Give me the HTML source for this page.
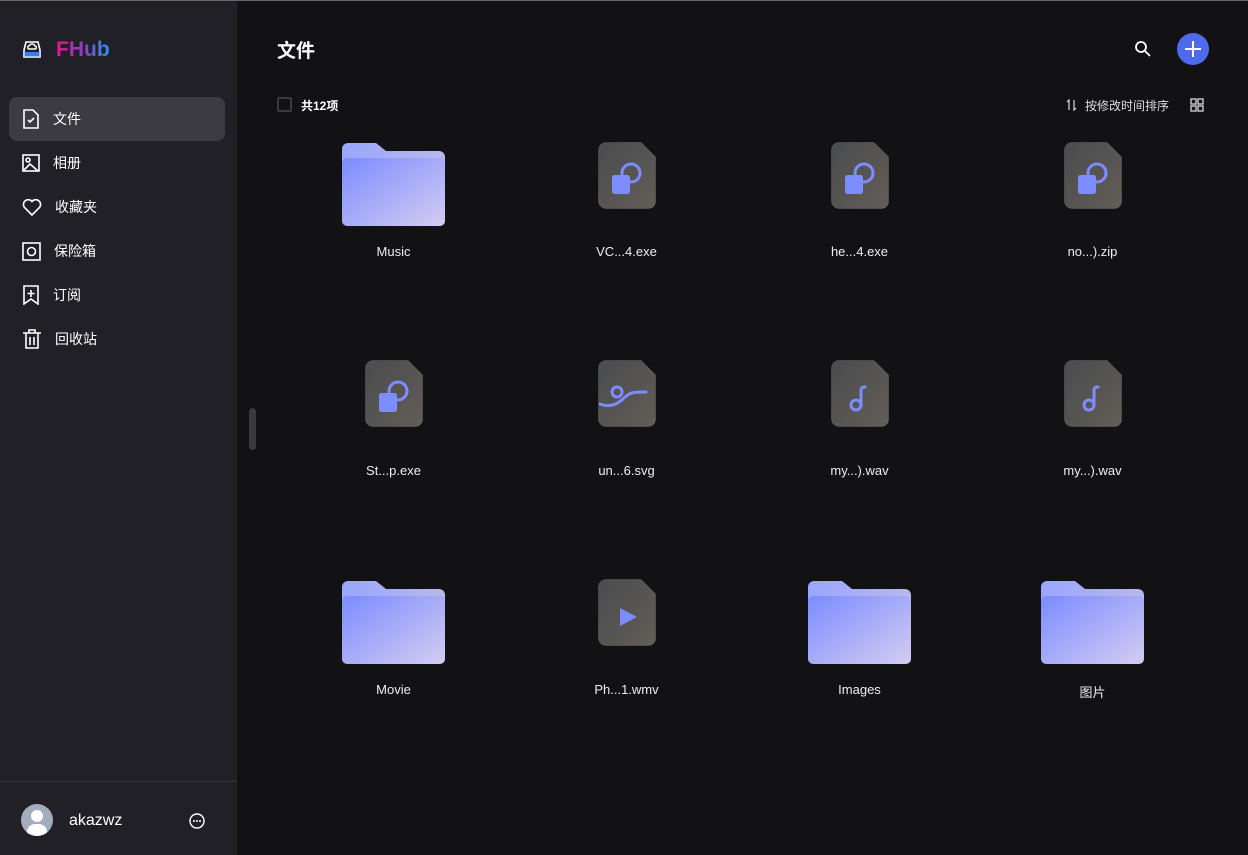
<!DOCTYPE html>
<html><head><meta charset="utf-8"><style>
*{margin:0;padding:0;box-sizing:border-box}
body{width:1248px;height:855px;background:#121214;font-family:"Liberation Sans","Noto Sans CJK SC",sans-serif;color:#eee;position:relative;overflow:hidden}
.top{position:absolute;left:0;top:0;width:1248px;height:1px;background:#666}
.side{position:absolute;left:0;top:1px;width:237px;height:854px;background:#212026}
.logo{position:absolute;left:22px;top:37px;display:flex;align-items:center}
.logo b{margin-left:14px;font-size:21px;font-weight:bold;background:linear-gradient(90deg,#e8178f,#8b3fbd,#1e9bf0);-webkit-background-clip:text;color:transparent}
.nav{position:absolute;left:9px;width:216px;height:44px;border-radius:8px;display:flex;align-items:center;font-size:14px;color:#fff}
.nav svg{margin-left:13px;margin-right:13px}
.nav.act{background:#3c3b41}
.sep{position:absolute;left:0;top:780px;width:237px;height:1px;background:#34333a}
.handle{position:absolute;left:249px;top:408px;width:7px;height:42px;border-radius:4px;background:#3a3a3e}
.it{position:absolute;width:233px;text-align:center;font-size:13px;color:#eee}
.folder,.file{position:absolute}
</style></head><body>
<div class="top"></div>
<div class="side">
 <div class="logo">
  <svg width="20" height="20" viewBox="0 0 20 20"><path d="M4 2h12l2 8v7H2v-7z" fill="none" stroke="#fff" stroke-width="1.6"/><rect x="2.5" y="12" width="15" height="4.5" fill="#3d7cf0"/><path d="M6.5 9a2 2 0 0 1 1-3.5a3 3 0 0 1 5.5 0.5a1.6 1.6 0 0 1 0.5 3z" fill="none" stroke="#fff" stroke-width="1.4"/></svg>
  <b>FHub</b>
 </div>
 <div class="nav act" style="top:96px"><svg width="18" height="20" viewBox="0 0 18 20" fill="none" stroke="#fff" stroke-width="1.6"><path d="M2 1h9l5 5v13H2z"/><path d="M6 11l2 2 4-4"/></svg>文件</div>
 <div class="nav" style="top:140px"><svg width="18" height="18" viewBox="0 0 18 18" fill="none" stroke="#fff" stroke-width="1.6"><rect x="1" y="1" width="16" height="16"/><circle cx="6" cy="6" r="2"/><path d="M2 16l6-6 8 7"/></svg>相册</div>
 <div class="nav" style="top:184px"><svg width="20" height="18" viewBox="0 0 20 18" fill="none" stroke="#fff" stroke-width="1.6"><path d="M10 17L2.5 9.5A4.5 4.5 0 0 1 10 3.5A4.5 4.5 0 0 1 17.5 9.5z"/></svg>收藏夹</div>
 <div class="nav" style="top:228px"><svg width="19" height="19" viewBox="0 0 19 19" fill="none" stroke="#fff" stroke-width="1.6"><rect x="1" y="1" width="17" height="17"/><circle cx="9.5" cy="9.5" r="4"/></svg>保险箱</div>
 <div class="nav" style="top:272px"><svg width="18" height="20" viewBox="0 0 18 20" fill="none" stroke="#fff" stroke-width="1.6"><path d="M2 1h14v18l-7-5-7 5z"/><path d="M9 5v7M5.5 8.5h7"/></svg>订阅</div>
 <div class="nav" style="top:316px"><svg width="20" height="20" viewBox="0 0 20 20" fill="none" stroke="#fff" stroke-width="1.6"><path d="M1 4h18M7 4V1h6v3M4 4v15h12V4M8 8v8M12 8v8"/></svg>回收站</div>
 <div class="sep"></div>
 <div style="position:absolute;left:21px;top:803px;width:32px;height:32px;border-radius:50%;background:#a4adbb;overflow:hidden"><div style="position:absolute;left:10px;top:6px;width:12px;height:12px;border-radius:50%;background:#fff"></div><div style="position:absolute;left:6px;top:20px;width:20px;height:12px;border-radius:8px 8px 0 0;background:#fff"></div></div>
 <div style="position:absolute;left:69px;top:811px;font-size:16px;color:#fff">akazwz</div>
 <svg style="position:absolute;left:189px;top:812px" width="16" height="16" viewBox="0 0 16 16"><circle cx="8" cy="8" r="7" fill="none" stroke="#fff" stroke-width="1.4"/><circle cx="5" cy="8" r="1" fill="#fff"/><circle cx="8" cy="8" r="1" fill="#fff"/><circle cx="11" cy="8" r="1" fill="#fff"/></svg>
</div>
<div class="handle"></div>
<div style="position:absolute;left:277px;top:36px;font-size:19px;font-weight:bold;color:#fff">文件</div>
<svg style="position:absolute;left:1134px;top:40px" width="18" height="18" viewBox="0 0 18 18" fill="none" stroke="#fff" stroke-width="1.8"><circle cx="7" cy="7" r="5"/><path d="M11 11l5 5"/></svg>
<div style="position:absolute;left:1177px;top:33px;width:32px;height:32px;border-radius:50%;background:#4f6bed"></div>
<svg style="position:absolute;left:1184px;top:40px" width="18" height="18" viewBox="0 0 18 18" stroke="#fff" stroke-width="2"><path d="M9 1v16M1 9h16"/></svg>
<div style="position:absolute;left:277px;top:97px;width:15px;height:15px;border:2px solid #3b3b3f;border-radius:2px"></div>
<div style="position:absolute;left:301px;top:97px;font-size:12px;color:#fff;font-weight:bold">共12项</div>
<svg style="position:absolute;left:1066px;top:99px" width="11" height="12" viewBox="0 0 11 12" fill="none" stroke="#ccc" stroke-width="1.3"><path d="M3 11V1L1 3M8 1v10l2-2"/></svg>
<div style="position:absolute;left:1085px;top:97px;font-size:12px;color:#ddd">按修改时间排序</div>
<svg style="position:absolute;left:1190px;top:98px" width="14" height="14" viewBox="0 0 14 14" fill="none" stroke="#ccc" stroke-width="1.4"><rect x="1" y="1" width="5" height="5"/><rect x="8" y="1" width="5" height="5"/><rect x="1" y="8" width="5" height="5"/><rect x="8" y="8" width="5" height="5"/></svg>

<svg width="0" height="0" style="position:absolute"><defs>
<linearGradient id="fg" x1="0" y1="0" x2="1" y2="1"><stop offset="0" stop-color="#7b8cff"/><stop offset="1" stop-color="#d4ccf2"/></linearGradient>
<linearGradient id="fb" x1="0" y1="0" x2="1" y2="0"><stop offset="0" stop-color="#9aa6ff"/><stop offset="1" stop-color="#b8b8e8"/></linearGradient>
<linearGradient id="dg" x1="0" y1="0" x2="1" y2="1"><stop offset="0" stop-color="#4a4c4e"/><stop offset="1" stop-color="#625d58"/></linearGradient>
<path id="fp" d="M8 0.5h35l14.5 14.5v44.5a7 7 0 0 1-7 7H8a7.5 7.5 0 0 1-7.5-7.5V8A7.5 7.5 0 0 1 8 0.5z" fill="url(#dg)" stroke="rgba(255,255,255,0.12)"/>
<g id="lock"><use href="#fp"/><circle cx="33" cy="31" r="9" fill="none" stroke="#7d8cff" stroke-width="3"/><rect x="14" y="33" width="18" height="19" rx="2.5" fill="#7d8cff"/></g>
<g id="music"><use href="#fp"/><circle cx="25" cy="45" r="5" fill="none" stroke="#7d8cff" stroke-width="3"/><path d="M30 45V30q0-3 4-3" fill="none" stroke="#7d8cff" stroke-width="3" stroke-linecap="round"/></g>
<g id="fold"><path d="M0 6a6 6 0 0 1 6-6h28l10 8h53a6 6 0 0 1 6 6v10H0z" fill="url(#fb)"/><rect x="0" y="15" width="103" height="68" rx="5" fill="url(#fg)"/></g>
</defs></svg>

<svg class="folder" style="left:342px;top:143px" width="103" height="83"><use href="#fold"/></svg>
<div class="it" style="left:277px;top:244px">Music</div>
<svg class="file" style="left:598px;top:142px" width="58" height="67"><use href="#lock"/></svg>
<div class="it" style="left:510px;top:244px">VC...4.exe</div>
<svg class="file" style="left:831px;top:142px" width="58" height="67"><use href="#lock"/></svg>
<div class="it" style="left:743px;top:244px">he...4.exe</div>
<svg class="file" style="left:1064px;top:142px" width="58" height="67"><use href="#lock"/></svg>
<div class="it" style="left:976px;top:244px">no...).zip</div>

<svg class="file" style="left:365px;top:360px" width="58" height="67"><use href="#lock"/></svg>
<div class="it" style="left:277px;top:463px">St...p.exe</div>
<svg class="file" style="left:598px;top:360px" width="58" height="67"><use href="#fp"/><circle cx="19" cy="32" r="5" fill="none" stroke="#7d8cff" stroke-width="3"/><path d="M2 44c10 4 18 0 24-6s10-6 22-6" fill="none" stroke="#7d8cff" stroke-width="3" stroke-linecap="round"/></svg>
<div class="it" style="left:510px;top:463px">un...6.svg</div>
<svg class="file" style="left:831px;top:360px" width="58" height="67"><use href="#music"/></svg>
<div class="it" style="left:743px;top:463px">my...).wav</div>
<svg class="file" style="left:1064px;top:360px" width="58" height="67"><use href="#music"/></svg>
<div class="it" style="left:976px;top:463px">my...).wav</div>

<svg class="folder" style="left:342px;top:581px" width="103" height="83"><use href="#fold"/></svg>
<div class="it" style="left:277px;top:682px">Movie</div>
<svg class="file" style="left:598px;top:579px" width="58" height="67"><use href="#fp"/><path d="M22 29l17 9-17 9z" fill="#7d8cff"/></svg>
<div class="it" style="left:510px;top:682px">Ph...1.wmv</div>
<svg class="folder" style="left:808px;top:581px" width="103" height="83"><use href="#fold"/></svg>
<div class="it" style="left:743px;top:682px">Images</div>
<svg class="folder" style="left:1041px;top:581px" width="103" height="83"><use href="#fold"/></svg>
<div class="it" style="left:976px;top:682px">图片</div>
</body></html>
